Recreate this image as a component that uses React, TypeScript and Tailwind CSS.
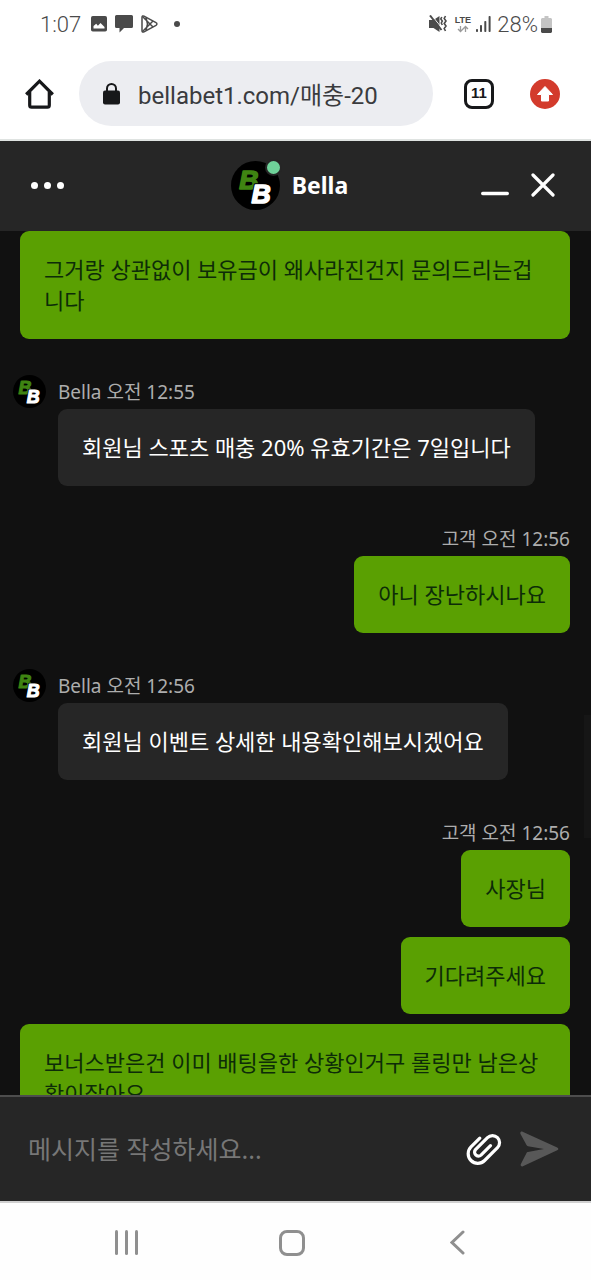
import type { ReactNode } from "react";

type Group = {
    from: "agent" | "customer"
    meta?: string
    messages: string[]
}

const groups: Group[] = [
    { from: "customer", messages: ["그거랑 상관없이 보유금이 왜사라진건지 문의드리는겁니다"] },
    { from: "agent", meta: "Bella 오전 12:55", messages: ["회원님 스포츠 매충 20% 유효기간은 7일입니다"] },
    { from: "customer", meta: "고객 오전 12:56", messages: ["아니 장난하시나요"] },
    { from: "agent", meta: "Bella 오전 12:56", messages: ["회원님 이벤트 상세한 내용확인해보시겠어요"] },
    {
        from: "customer",
        meta: "고객 오전 12:56",
        messages: ["사장님", "기다려주세요", "보너스받은건 이미 배팅을한 상황인거구 롤링만 남은상황이잖아요"],
    },
]

function Logo({ className }: { className: string }) {
    return (
        <svg viewBox="0 0 48 48" className={className} role="img" aria-label="Bella">
            <circle cx="24" cy="24" r="24" fill="#000" />
            <g fontFamily="'Liberation Sans', sans-serif" fontWeight="700" fontStyle="italic" fontSize="26" strokeLinejoin="round">
                <text x="8" y="27" fill="#3f8412" stroke="#3f8412" strokeWidth="1.600">B</text>
                <text x="20" y="41" fill="#000" stroke="#000" strokeWidth="3.600" aria-hidden="true">B</text>
                <text x="20" y="41" fill="#fff" stroke="#fff" strokeWidth="1.600">B</text>
            </g>
        </svg>
    )
}

function StatusBar() {
    return (
        <div className="flex h-12 shrink-0 items-center justify-between pr-[39px] pl-10 text-[22px] font-light text-[#4a4a4a]">
            <div className="flex items-center">
                <span className="w-[51px]">1:07</span>
                <svg width="16" height="16" viewBox="0 0 16 16" fill="none">
                    <rect width="16" height="15.5" rx="1.8" fill="#4a4a4a" />
                    <path d="M2.5 12.5V10l2.7-2.2 1.7 2 2.6-2.8 4 4v1.5z" fill="#fff" />
                </svg>
                <svg className="ml-2" width="18" height="18" viewBox="0 0 18 18" fill="#4a4a4a">
                    <path d="M1.5 0h15A1.5 1.5 0 0 1 18 1.5v10a1.5 1.5 0 0 1-1.5 1.5H9l-4.500 4.500V13h-3A1.5 1.5 0 0 1 0 11.500v-10A1.5 1.5 0 0 1 1.500 0z" />
                </svg>
                <svg className="ml-2" width="17" height="18" viewBox="0 0 17 18" fill="none" stroke="#4a4a4a" strokeWidth="1.500" strokeLinejoin="round">
                    <path d="M1 2.200v13.600c0 1.200 1 1.600 2 1.100l12-6.600c1.200-.7 1.200-2 0-2.600L3 1.100C2 .6 1 1 1 2.200z" />
                    <path d="M1.500 1.500 12 12M1.500 16.500 12 6M5 2.500l1.500 6.500L5 15.500" />
                </svg>
                <span className="ml-4 size-[6px] rounded-full bg-[#4a4a4a]" />
            </div>
            <div className="flex items-center">
                <svg width="19" height="18" viewBox="0 0 19 18" fill="none">
                    <path d="M0 5h4.500L10.500 1v16l-6-4H0z" fill="#4a4a4a" />
                    <path d="M2.500 0 13.500 14" stroke="#fff" strokeWidth="1" />
                    <path d="M1 .5 12.500 15" stroke="#4a4a4a" strokeWidth="2" />
                    <path d="M12.800 2l-1 2 1.500 2-1 2 1 2M16.500 1l-1.300 2.500 1.800 2.500-1.800 2.500 1.800 2.500-1.800 2.500 1.300 2.500" stroke="#4a4a4a" strokeWidth="1.600" />
                </svg>
                <div className="ml-[6px] flex w-[17px] flex-col items-center">
                    <span className="font-['Liberation_Sans',sans-serif] text-[9px] leading-[10px] font-bold">LTE</span>
                    <svg width="12" height="8" viewBox="0 0 12 8" fill="none" stroke="#9b9b9b" strokeWidth="1.300">
                        <path d="M3.500 1v5.500M1 4l2.500 2.500L6 4M8.500 7V1.500M6 4l2.500-2.500L11 4" />
                    </svg>
                </div>
                <svg className="ml-[5px]" width="15" height="16" viewBox="0 0 15 16" fill="#4a4a4a">
                    <rect y="13" width="2" height="3" rx=".8" />
                    <rect x="4" y="9" width="2" height="7" rx=".8" />
                    <rect x="8.300" y="5" width="2" height="11" rx=".8" />
                    <rect x="12.600" width="2" height="16" rx=".8" />
                </svg>
                <span className="ml-[6px]">28%</span>
                <svg className="ml-[3px]" width="11" height="17" viewBox="0 0 11 17">
                    <path d="M3.500 0h4v2H10l1 1v9H0V3l1-1h2.500z" fill="#c4c4c4" />
                    <path d="M0 12h11v4l-1 1H1l-1-1z" fill="#4a4a4a" />
                </svg>
            </div>
        </div>
    )
}

function BrowserBar() {
    return (
        <div className="flex shrink-0 items-center border-b-2 border-[#dfe3e1] py-[13px] pr-[31px] pl-[25px]">
            <button aria-label="Home">
                <svg width="29" height="30" viewBox="0 0 29 30" fill="none" stroke="#17181a" strokeWidth="3.200">
                    <path d="M1.200 15.500 14.500 2.200l13.300 13.300" />
                    <path d="M4.700 13v13.300c0 1.200.7 1.900 1.900 1.900h15.800c1.200 0 1.900-.7 1.900-1.900V13" />
                </svg>
            </button>
            <label className="ml-[25px] flex h-[65px] min-w-0 flex-1 items-center rounded-full bg-[#ecedf1] pr-4 pl-6">
                <svg className="shrink-0" width="17" height="22" viewBox="0 0 17 22">
                    <rect y="7.500" width="17" height="14" rx="2" fill="#17181a" />
                    <path d="M4 8.500V5.500a4.500 4.500 0 0 1 9 0v3" fill="none" stroke="#17181a" strokeWidth="2" />
                </svg>
                <input
                    aria-label="Address"
                    className="ml-[18px] h-full min-w-0 flex-1 bg-transparent text-[24px] text-[#3a3b3e] outline-none"
                    defaultValue="bellabet1.com/매충-20"
                />
            </label>
            <button className="ml-[31px] flex size-[30px] items-center justify-center rounded-lg border-3 border-[#17181a] font-['Liberation_Sans',sans-serif] text-[15px] font-bold text-[#17181a]">
                11
            </button>
            <button aria-label="Update" className="ml-9">
                <svg width="30" height="30" viewBox="0 0 30 30">
                    <circle cx="15" cy="15" r="15" fill="#d33b2c" />
                    <path d="M15 7.500 22.500 15.500h-4V22h-7v-6.500h-4z" fill="#fff" stroke="#fff" strokeLinejoin="round" />
                </svg>
            </button>
        </div>
    )
}

function ChatHeader() {
    return (
        <header className="grid h-[90px] shrink-0 grid-cols-[1fr_auto_1fr] items-center bg-[#262626] pr-3 pb-[2px]">
            <button aria-label="Menu" className="ml-[31px] flex w-fit gap-[6px]">
                <span className="size-[7px] rounded-full bg-white" />
                <span className="size-[7px] rounded-full bg-white" />
                <span className="size-[7px] rounded-full bg-white" />
            </button>
            <div className="flex items-center gap-3">
                <div className="relative">
                    <Logo className="size-[49px]" />
                    <span className="absolute -top-[2px] -right-[2px] size-[17px] rounded-full border-2 border-[#262626] bg-[#6fd39a]" />
                </div>
                <h1 className="text-[23px] font-bold text-white">Bella</h1>
            </div>
            <div className="flex items-center justify-end gap-[22px] pr-6">
                <button aria-label="Minimize">
                    <svg width="28" height="24" viewBox="0 0 28 24" stroke="#fff" strokeWidth="3.400" strokeLinecap="round">
                        <path d="M1.700 20.500h24.600" />
                    </svg>
                </button>
                <button aria-label="Close">
                    <svg width="24" height="24" viewBox="0 0 24 24" stroke="#fff" strokeWidth="3.200" strokeLinecap="round">
                        <path d="M2 2l20 20M22 2 2 22" />
                    </svg>
                </button>
            </div>
        </header>
    )
}

function Bubble({ from, children }: { from: Group["from"]; children: ReactNode }) {
    const color = from === "agent" ? "bg-[#262626] text-white" : "bg-[#5aa002] text-[#0d2c08]"
    return <p className={`w-fit rounded-[9px] px-6 py-[23px] text-[22px] leading-[31px] break-all ${color}`}>{children}</p>
}

function MessageGroup({ group }: { group: Group }) {
    const agent = group.from === "agent"
    return (
        <section className={agent ? "flex pr-5 pl-[13px]" : "pr-[21px] pl-5"}>
            {agent && <Logo className="mr-3 size-[33px] shrink-0" />}
            <div className={agent ? "flex flex-col items-start" : "flex flex-col items-end"}>
                {group.meta && <div className="text-[19px] leading-[34px] text-[#adadad]">{group.meta}</div>}
                <div className={agent ? "flex flex-col items-start gap-[10px]" : "flex flex-col items-end gap-[10px]"}>
                    {group.messages.map((m) => <Bubble key={m} from={group.from}>{m}</Bubble>)}
                </div>
            </div>
        </section>
    )
}

function Composer() {
    return (
        <form className="flex h-[106px] shrink-0 items-center border-t-2 border-[#4d4d4d] bg-[#262626] pr-8 pl-7">
            <input
                aria-label="메시지"
                className="h-full min-w-0 flex-1 bg-transparent text-[25px] text-white outline-none placeholder:text-[#777777]"
                placeholder="메시지를 작성하세요..."
            />
            <button type="button" aria-label="Attach">
                <svg width="36" height="33" viewBox="0 0 36 33" fill="none" stroke="#fff" strokeWidth="3.200" strokeLinecap="round">
                    <path d="M13.800 5.100 5 13.900a9.600 9.600 0 0 0 13.600 13.600L31.500 14.600a7.050 7.050 0 0 0-10-10L9.500 16.600a3.900 3.900 0 0 0 5.500 5.500l9.500-9.500" />
                </svg>
            </button>
            <button type="button" aria-label="Send" className="ml-[18px]">
                <svg width="39" height="36" viewBox="0 0 39 36" fill="#585858">
                    <path d="M2.600.7 37.200 16.500c1.500.7 1.500 2.100 0 2.800L2.900 35.300c-1.500.7-2.800-.6-2-2.200l5.500-10.900c.3-.6.800-1 1.500-1.100L24 18 8 15.200c-.7-.1-1.200-.5-1.500-1.100L.5 2.900C-.2 1.300 1 0 2.600.7z" />
                </svg>
            </button>
        </form>
    )
}

function SystemNav() {
    return (
        <nav className="grid h-[79px] shrink-0 grid-cols-3 items-center justify-items-center border-t-2 border-[#d0d0d0] bg-[#fefefe] pt-[2px] pr-[51px] pl-[44px]">
            <button aria-label="Recent apps" className="flex gap-[7px]">
                <span className="h-[25px] w-[3px] rounded-full bg-[#8f8f8f]" />
                <span className="h-[25px] w-[3px] rounded-full bg-[#8f8f8f]" />
                <span className="h-[25px] w-[3px] rounded-full bg-[#8f8f8f]" />
            </button>
            <button aria-label="Home screen" className="size-[26px] rounded-lg border-3 border-[#8f8f8f]" />
            <button aria-label="Back">
                <svg width="15" height="25" viewBox="0 0 15 25" fill="none" stroke="#8f8f8f" strokeWidth="3" strokeLinecap="round">
                    <path d="M13 2 2 12.500 13 23" />
                </svg>
            </button>
        </nav>
    )
}

export default function App() {
    return (
        <div className="flex h-screen flex-col bg-white">
            <div className="font-[Roboto,'Noto_Sans_CJK_KR',sans-serif]">
                <StatusBar />
                <BrowserBar />
            </div>
            <div className="flex min-h-0 flex-1 flex-col bg-[#111111] font-['Noto_Sans','Noto_Sans_CJK_KR',sans-serif]">
                <ChatHeader />
                <main className="relative flex min-h-0 flex-1 flex-col gap-9 overflow-hidden">
                    {groups.map((g, i) => <MessageGroup key={i} group={g} />)}
                    <span className="absolute top-[484px] right-0 h-[123px] w-[7px] bg-[#161616]" />
                </main>
                <Composer />
            </div>
            <SystemNav />
        </div>
    )
}
